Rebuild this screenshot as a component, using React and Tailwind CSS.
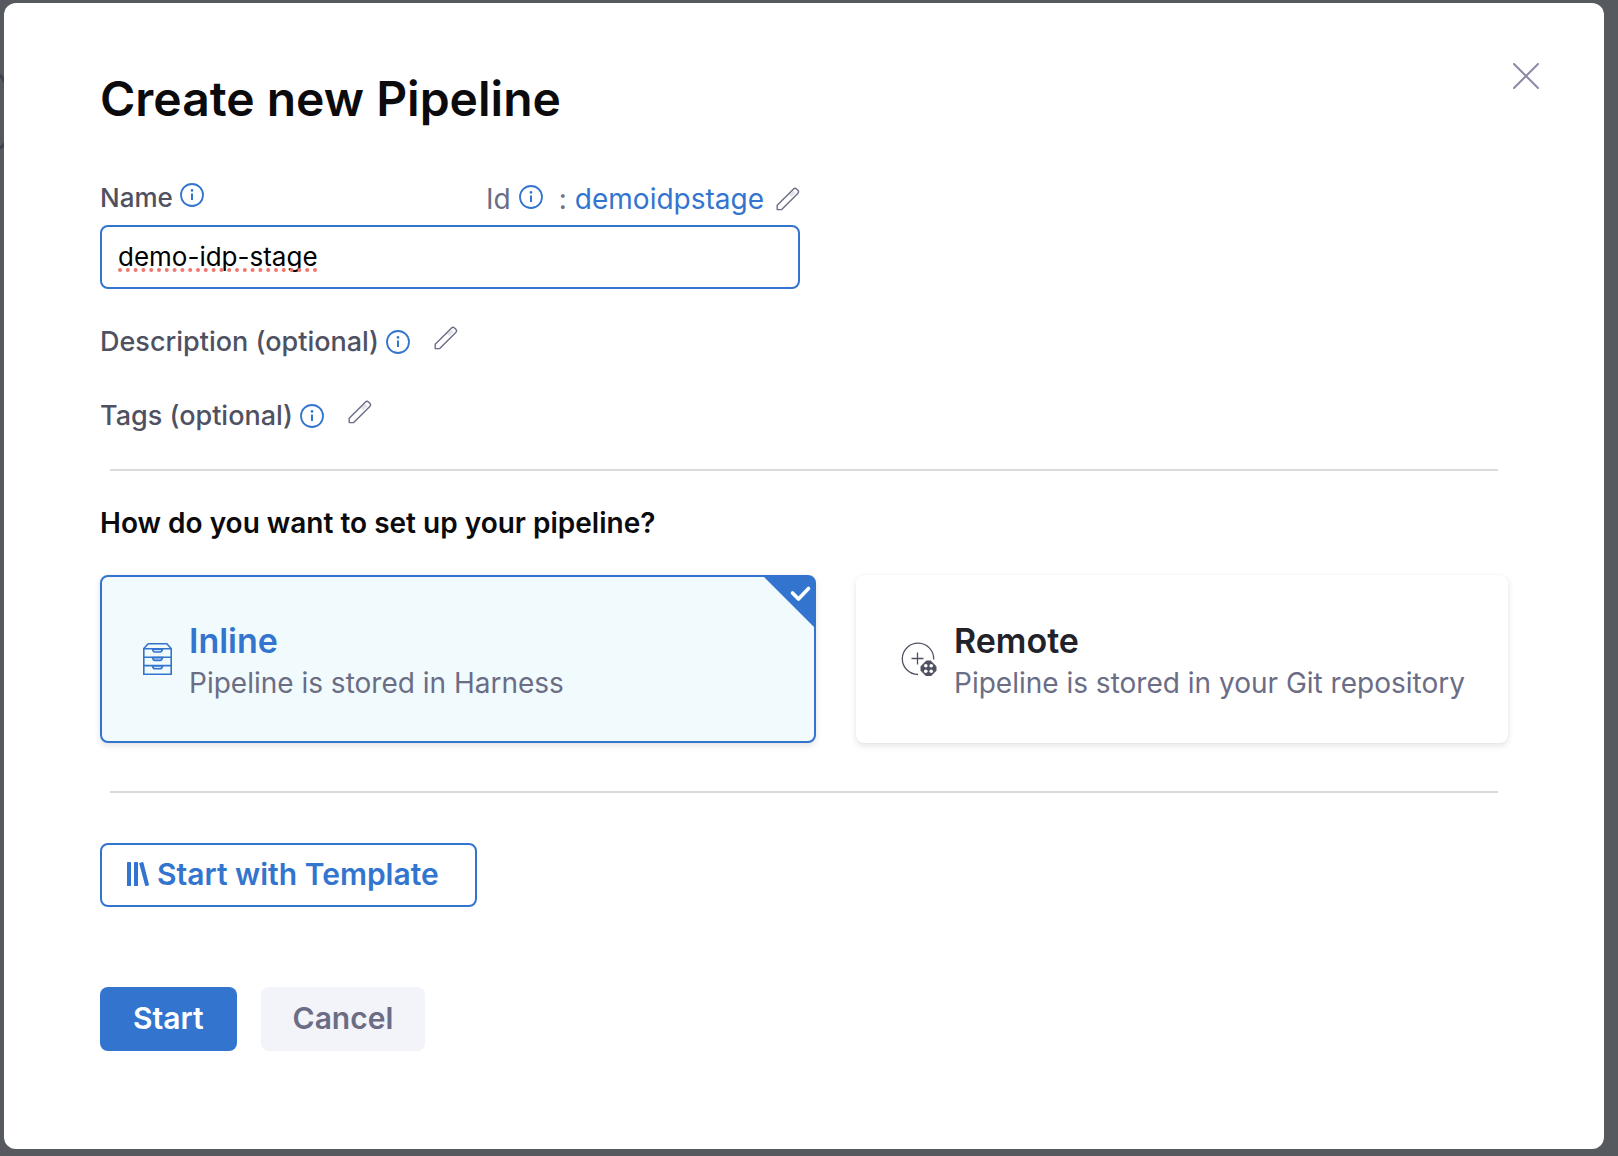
import { useState } from "react";

function InfoIcon() {
  return (
    <svg className="size-6 shrink-0 text-[#3375ce]" viewBox="0 0 24 24" fill="none" aria-hidden="true">
      <circle cx="12" cy="12" r="11" stroke="currentColor" strokeWidth="1.800" />
      <path d="M12 10.6v6.4" stroke="currentColor" strokeWidth="2" />
      <circle cx="12" cy="7.4" r="1.300" fill="currentColor" />
    </svg>
  );
}

function PencilIcon() {
  return (
    <svg className="size-6 shrink-0 text-[#6b6d85]" viewBox="0 0 24 24" fill="none" aria-hidden="true">
      <path d="M12.5 8.3 17 3.8l2.6 2.3-3.8 3.6z" fill="#e2e2ea" />
      <path
        d="M1.2 22.6v-4.4L17.3 2.2c1.1-1.1 2.2-1.1 3.2-.2l1.3 1.3c1 1 1 2.100 0 3.200L5.700 22.600z"
        stroke="currentColor"
        strokeWidth="1.400"
        strokeLinejoin="round"
      />
    </svg>
  );
}

function DrawersIcon() {
  return (
    <svg className="h-8 w-[29px] shrink-0" viewBox="0 0 29 32" fill="none" stroke="#3375ce" strokeWidth="1.600" aria-hidden="true">
      <path d="M.8 5.500 5.200.8h18.600l4.400 4.700v25.700H.8zM.8 5.700h27.400M.8 14.200h27.400M.8 22.600h27.400" />
      <path
        d="M9.500 6.200h10c-.4 2-.9 2.800-2.200 2.800h-5.600c-1.300 0-1.800-.8-2.200-2.800zM9.500 14.600h10c-.4 2-.9 2.800-2.200 2.800h-5.600c-1.300 0-1.800-.8-2.200-2.800zM9.500 23h10c-.4 2-.9 2.800-2.200 2.800h-5.600c-1.300 0-1.800-.8-2.200-2.800z"
        fill="#cfe3f7"
      />
    </svg>
  );
}

function RemoteIcon() {
  return (
    <svg className="h-[34px] w-9 shrink-0" viewBox="0 0 36 34" fill="none" stroke="#4f5162" aria-hidden="true">
      <path d="M32.700 17.500a15.700 15.700 0 1 0-15.700 15" strokeWidth="1.300" />
      <path d="M16.500 10.500v12M10.500 16.500h12" strokeWidth="1.300" />
      <path d="M25.400 19h4.200l5.400 5.400v4.200L29.600 34h-4.200L20 28.600v-4.200z" fill="#4f5162" strokeWidth="1" strokeLinejoin="round" />
      <g fill="#fff" stroke="none">
        <circle cx="24.800" cy="23.800" r="1.800" />
        <circle cx="30.200" cy="23.800" r="1.800" />
        <circle cx="24.800" cy="29.200" r="1.800" />
        <circle cx="30.200" cy="29.200" r="1.800" />
      </g>
    </svg>
  );
}

function TemplateIcon() {
  return (
    <svg className="h-6 w-[22px] shrink-0" viewBox="0 0 22 24" fill="#3375ce" aria-hidden="true">
      <rect x="0" y="0" width="4" height="24" rx=".6" />
      <rect x="7" y="0" width="4" height="24" rx=".6" />
      <path d="M12.500.9 15.600.1q.6-.1.800.5L22 22.800q.1.600-.5.800l-2.600.4q-.6.100-.8-.5L12.200 1.600q-.1-.5.300-.7z" />
    </svg>
  );
}

function OptionalField({ label }) {
  return (
    <div className="flex h-[34px] items-center">
      <span className="text-[27px] leading-8 font-medium text-[#4f5162]">{label}</span>
      <span className="ml-[7px]">
        <InfoIcon />
      </span>
      <button type="button" aria-label={`Edit ${label}`} className="mb-2 ml-6">
        <PencilIcon />
      </button>
    </div>
  );
}

function StoreCard({ icon, title, text, selected, onSelect }) {
  return (
    <button
      type="button"
      aria-pressed={selected}
      onClick={onSelect}
      className={
        "relative flex h-[168px] items-center rounded-lg border-2 text-left shadow-[0_3px_6px_rgba(40,41,61,0.12),0_0_2px_rgba(40,41,61,0.05)] " +
        (selected ? "border-[#3375ce] bg-[#f1fafd] pl-[41px]" : "border-white bg-white pl-[43px]")
      }
    >
      {icon}
      <span className="ml-[17px] flex flex-col pt-1.5">
        <span className={"text-[34px] leading-[42px] font-semibold " + (selected ? "text-[#3375ce]" : "text-[#22222a]")}>
          {title}
        </span>
        <span className="text-[28px] leading-[42px] text-[#6b6d85]">{text}</span>
      </span>
      {selected && (
        <svg className="absolute -top-px -right-px size-[52px]" viewBox="0 0 52 52" fill="none" aria-hidden="true">
          <path d="M0 0h46a6 6 0 0 1 6 6v46z" fill="#3375ce" />
          <path d="m29.500 17 6 6 10-10.500" stroke="#fff" strokeWidth="3.600" strokeLinecap="round" strokeLinejoin="round" />
        </svg>
      )}
    </button>
  );
}

export default function App() {
  const [name, setName] = useState("demo-idp-stage");
  const [store, setStore] = useState("inline");

  return (
    <div className="relative min-h-screen bg-[#56595e] pt-[3px] pr-3.5 pb-[7px] pl-1 font-['Inter',sans-serif]">
      <svg className="absolute top-[70px] left-0 h-[90px] w-1" viewBox="0 0 4 90" fill="none" stroke="#3f424d" strokeWidth="3" aria-hidden="true">
        <path d="M-1 5q4 2 6 8M-1 78q4-1 6-5" />
      </svg>
      <main role="dialog" aria-labelledby="dialog-title" className="relative min-h-[1146px] rounded-xl bg-white px-24 pt-[66px] pb-24">
        <button type="button" aria-label="Close" className="absolute top-[58px] right-[63px] p-0.5">
          <svg className="size-[26px]" viewBox="0 0 26 26" fill="none" stroke="#8c8ba6" strokeWidth="2" strokeLinecap="round" aria-hidden="true">
            <path d="m1 1 24 24M25 1 1 25" />
          </svg>
        </button>

        <h1 id="dialog-title" className="text-[48px] leading-[60px] font-semibold text-[#0b0b0d]">
          Create new Pipeline
        </h1>

        <div className="mt-12 max-w-[700px]">
          <div className="flex h-11 items-center justify-between">
            <div className="flex items-center gap-[7px] pb-0.5">
              <label htmlFor="pipeline-name" className="text-[26px] leading-8 font-medium text-[#4f5162]">
                Name
              </label>
              <span className="mb-1.5">
                <InfoIcon />
              </span>
            </div>
            <div className="flex items-center text-[28px] leading-8 text-[#6b6d85]">
              <span>Id</span>
              <span className="mr-4 mb-1 ml-2">
                <InfoIcon />
              </span>
              <span>:</span>
              <span className="ml-2 text-[#3375ce]">demoidpstage</span>
              <button type="button" aria-label="Edit Id" className="ml-3">
                <PencilIcon />
              </button>
            </div>
          </div>
          <div className="relative mt-1">
            <input
              id="pipeline-name"
              type="text"
              spellCheck={false}
              value={name}
              onChange={(e) => setName(e.target.value)}
              className="h-16 w-full rounded-lg border-2 border-[#3375ce] bg-white px-4 pb-0.5 text-[26px] text-black outline-none"
            />
            <svg className="pointer-events-none absolute top-[43px] left-[18px] h-1 w-[200px]" viewBox="0 0 200 4" aria-hidden="true">
              <path d="M2 2h197" stroke="#f0766e" strokeWidth="4" strokeLinecap="round" strokeDasharray="0 7.800" />
            </svg>
          </div>
        </div>

        <div className="mt-9 flex flex-col gap-10">
          <OptionalField label="Description (optional)" />
          <OptionalField label="Tags (optional)" />
        </div>

        <hr className="mx-2.5 mt-9 border-t-2 border-[#d9dadc]" />

        <h2 className="mt-8 text-[28px] leading-10 font-semibold text-[#0b0b0d]">How do you want to set up your pipeline?</h2>

        <div className="mt-8 grid grid-cols-[716fr_652fr] gap-10">
          <StoreCard
            icon={<DrawersIcon />}
            title="Inline"
            text="Pipeline is stored in Harness"
            selected={store === "inline"}
            onSelect={() => setStore("inline")}
          />
          <StoreCard
            icon={<RemoteIcon />}
            title="Remote"
            text="Pipeline is stored in your Git repository"
            selected={store === "remote"}
            onSelect={() => setStore("remote")}
          />
        </div>

        <hr className="mx-2.5 mt-12 border-t-2 border-[#d9dadc]" />

        <button
          type="button"
          className="mt-[50px] flex h-16 items-center gap-2 rounded-lg border-2 border-[#3375ce] bg-white pr-9 pb-0.5 pl-[25px] text-[30px] font-semibold text-[#3375ce]"
        >
          <TemplateIcon />
          Start with Template
        </button>

        <div className="mt-20 flex gap-6">
          <button type="button" className="h-16 rounded-lg bg-[#3375ce] px-[33px] pb-0.5 text-[30px] font-semibold text-white">
            Start
          </button>
          <button type="button" className="h-16 rounded-lg bg-[#f3f3fa] px-8 pb-0.5 text-[30px] font-semibold text-[#6b6d85]">
            Cancel
          </button>
        </div>
      </main>
    </div>
  );
}
